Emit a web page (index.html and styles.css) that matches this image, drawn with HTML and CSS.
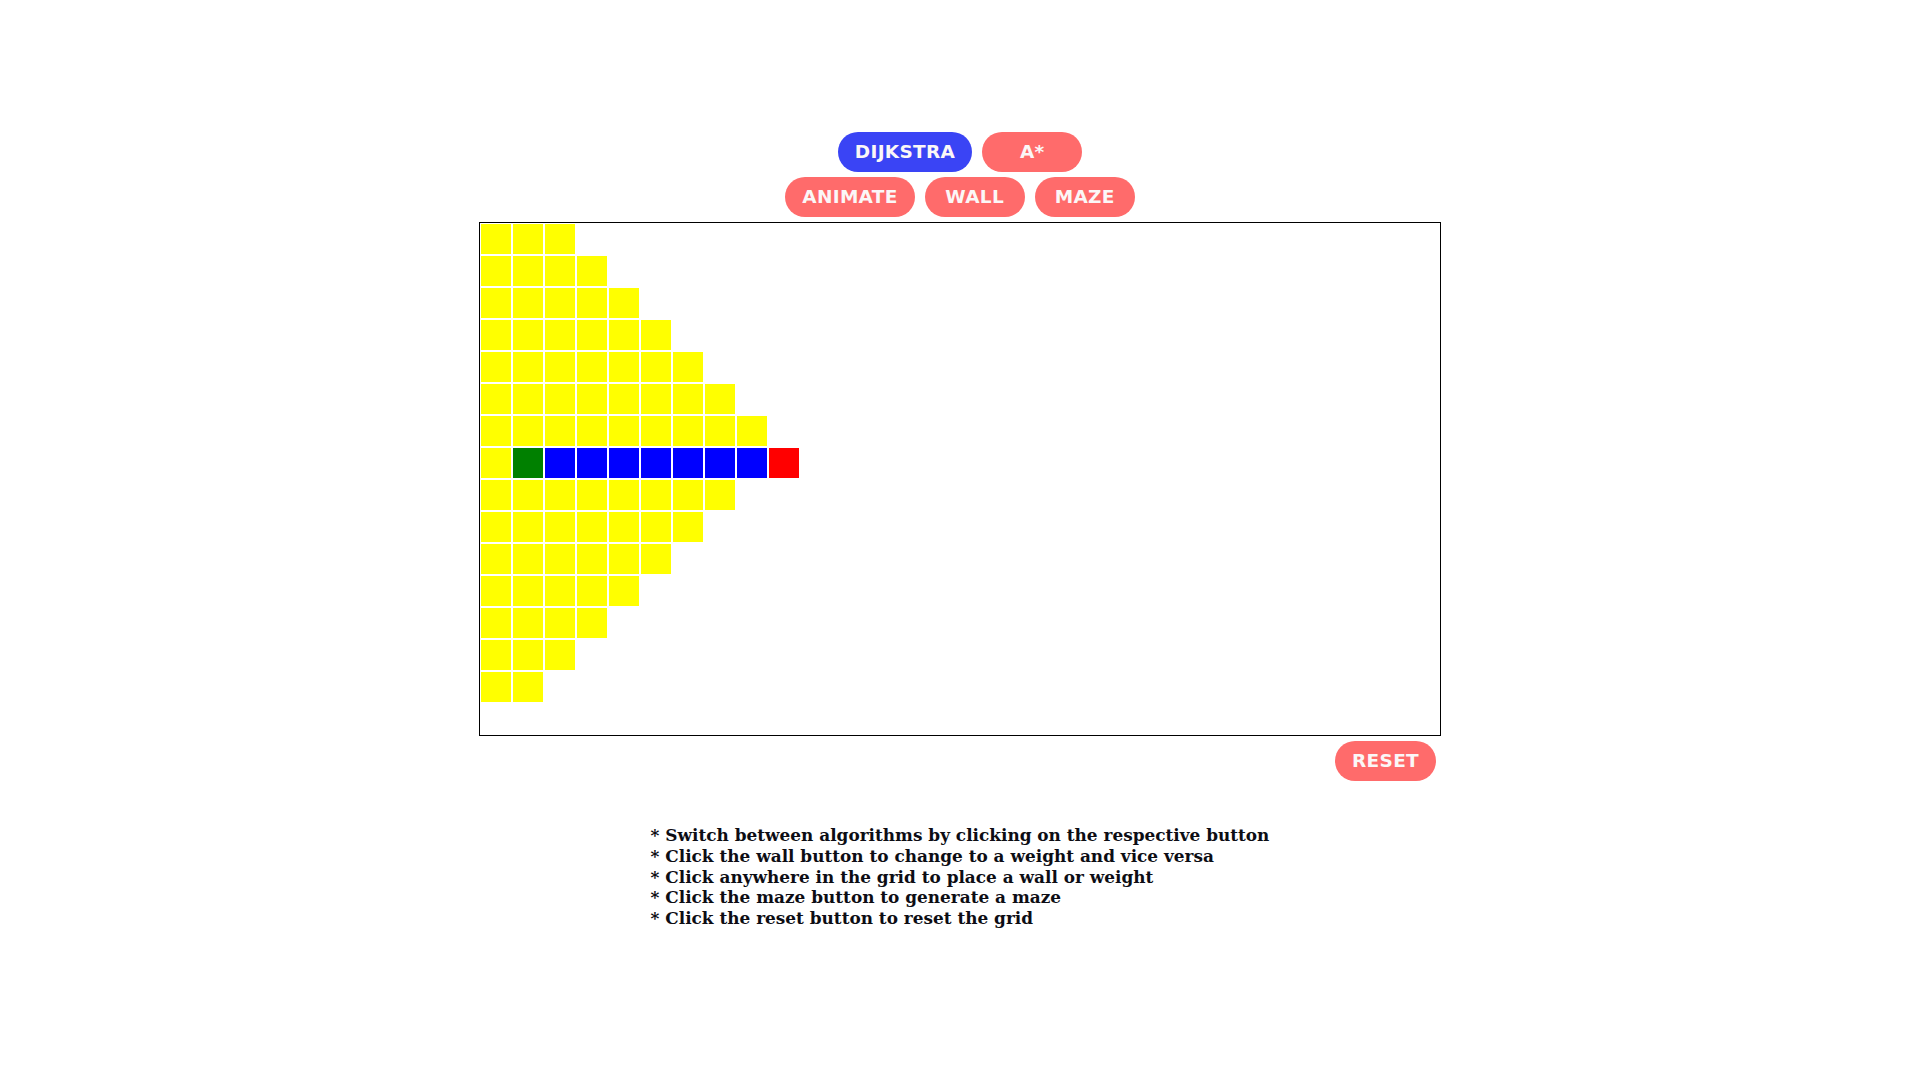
FILE: index.html
```html
<!DOCTYPE html>
<html>
<head>
<meta charset="utf-8">
<title>Pathfinding</title>
<link rel="stylesheet" href="styles.css">
</head>
<body>
<div class="app">
  <div class="btn-row">
    <button class="btn btn-active">DIJKSTRA</button>
    <button class="btn">A*</button>
  </div>
  <div class="btn-row">
    <button class="btn">ANIMATE</button>
    <button class="btn">WALL</button>
    <button class="btn">MAZE</button>
  </div>
  <div class="grid">
    <div class="row"><i class="c y"></i><i class="c y"></i><i class="c y"></i></div>
    <div class="row"><i class="c y"></i><i class="c y"></i><i class="c y"></i><i class="c y"></i></div>
    <div class="row"><i class="c y"></i><i class="c y"></i><i class="c y"></i><i class="c y"></i><i class="c y"></i></div>
    <div class="row"><i class="c y"></i><i class="c y"></i><i class="c y"></i><i class="c y"></i><i class="c y"></i><i class="c y"></i></div>
    <div class="row"><i class="c y"></i><i class="c y"></i><i class="c y"></i><i class="c y"></i><i class="c y"></i><i class="c y"></i><i class="c y"></i></div>
    <div class="row"><i class="c y"></i><i class="c y"></i><i class="c y"></i><i class="c y"></i><i class="c y"></i><i class="c y"></i><i class="c y"></i><i class="c y"></i></div>
    <div class="row"><i class="c y"></i><i class="c y"></i><i class="c y"></i><i class="c y"></i><i class="c y"></i><i class="c y"></i><i class="c y"></i><i class="c y"></i><i class="c y"></i></div>
    <div class="row"><i class="c y"></i><i class="c g"></i><i class="c b"></i><i class="c b"></i><i class="c b"></i><i class="c b"></i><i class="c b"></i><i class="c b"></i><i class="c b"></i><i class="c r"></i></div>
    <div class="row"><i class="c y"></i><i class="c y"></i><i class="c y"></i><i class="c y"></i><i class="c y"></i><i class="c y"></i><i class="c y"></i><i class="c y"></i></div>
    <div class="row"><i class="c y"></i><i class="c y"></i><i class="c y"></i><i class="c y"></i><i class="c y"></i><i class="c y"></i><i class="c y"></i></div>
    <div class="row"><i class="c y"></i><i class="c y"></i><i class="c y"></i><i class="c y"></i><i class="c y"></i><i class="c y"></i></div>
    <div class="row"><i class="c y"></i><i class="c y"></i><i class="c y"></i><i class="c y"></i><i class="c y"></i></div>
    <div class="row"><i class="c y"></i><i class="c y"></i><i class="c y"></i><i class="c y"></i></div>
    <div class="row"><i class="c y"></i><i class="c y"></i><i class="c y"></i></div>
    <div class="row"><i class="c y"></i><i class="c y"></i></div>
    <div class="row"></div>
  </div>
  <div class="reset-row">
    <button class="btn">RESET</button>
  </div>
  <div class="help">
    <div>* Switch between algorithms by clicking on the respective button</div>
    <div>* Click the wall button to change to a weight and vice versa</div>
    <div>* Click anywhere in the grid to place a wall or weight</div>
    <div>* Click the maze button to generate a maze</div>
    <div>* Click the reset button to reset the grid</div>
  </div>
</div>
</body>
</html>
```
FILE: styles.css
```css
html, body {
  margin: 0;
  padding: 0;
  background: #ffffff;
}

.app {
  display: flex;
  flex-direction: column;
  align-items: center;
  gap: 5px;
  padding-top: 132px;
}

.btn-row {
  display: flex;
  gap: 10px;
}

.btn {
  height: 40px;
  min-width: 100px;
  padding: 0 17px;
  border: none;
  border-radius: 20px;
  background: #ff6b6b;
  color: #fbf7f7;
  font-family: "DejaVu Sans", "Open Sans", sans-serif;
  font-weight: 700;
  font-size: 18.5px;
  letter-spacing: 0.3px;
  line-height: 40px;
  cursor: pointer;
}

.btn-active {
  background: #3a44f5;
}

.grid {
  width: 960px;
  height: 512px;
  border: 1px solid #000000;
  display: flex;
  flex-direction: column;
}

.row {
  display: flex;
  height: 32px;
}

.c {
  display: block;
  width: 32px;
  height: 32px;
  box-sizing: border-box;
  border: 1px solid #ffffff;
}

.y { background: #ffff00; }
.g { background: #008000; }
.b { background: #0000ff; }
.r { background: #ff0000; }

.reset-row {
  width: 962px;
  display: flex;
  justify-content: flex-end;
  padding-right: 5px;
  box-sizing: border-box;
}

.help {
  margin-top: 39px;
  font-family: "DejaVu Serif", serif;
  font-weight: 700;
  font-size: 16.9px;
  line-height: 20.8px;
  color: #0d0d14;
  text-align: left;
}
```
